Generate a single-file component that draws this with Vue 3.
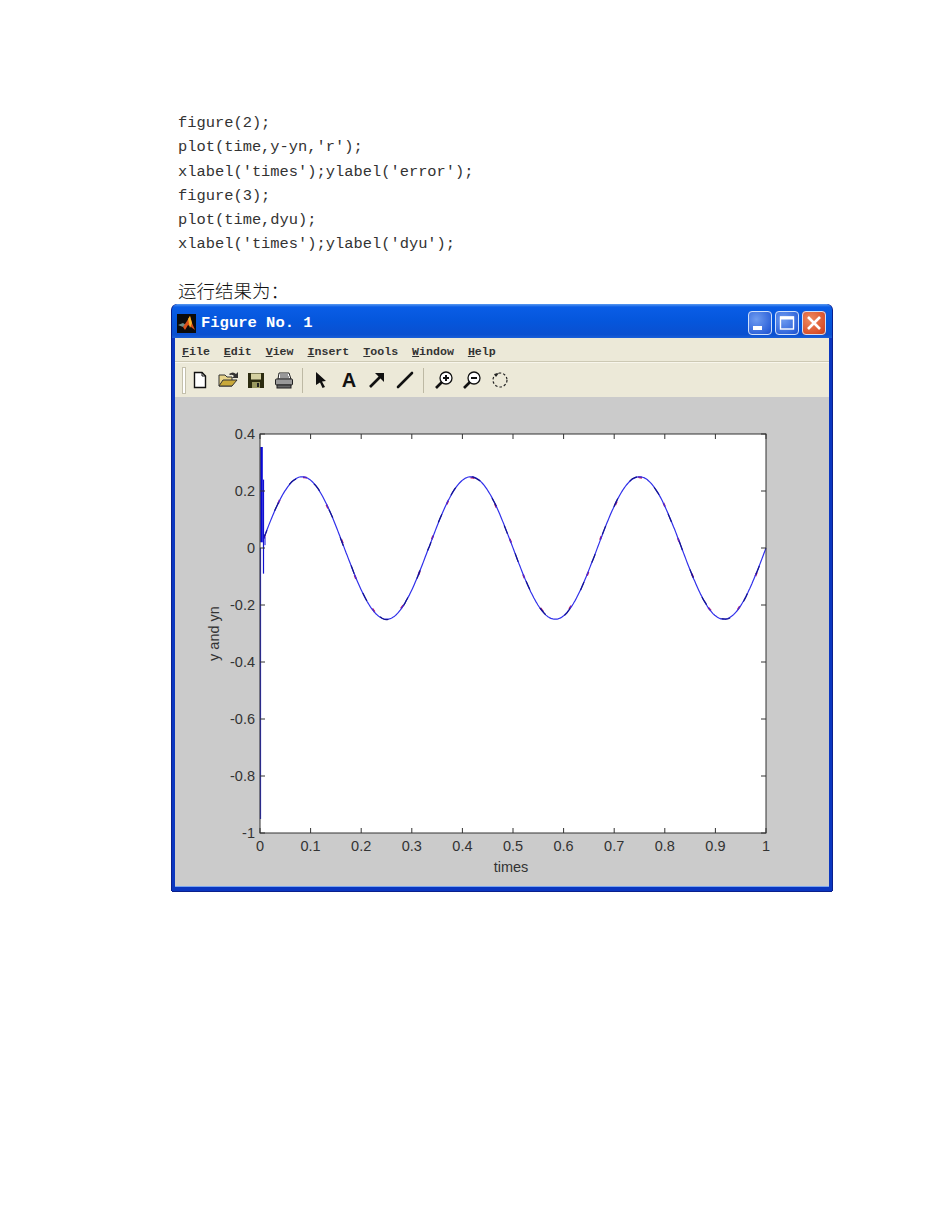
<script setup>
const code = [
  "figure(2);",
  "plot(time,y-yn,'r');",
  "xlabel('times');ylabel('error');",
  "figure(3);",
  "plot(time,dyu);",
  "xlabel('times');ylabel('dyu');",
];
const menus = ["File", "Edit", "View", "Insert", "Tools", "Window", "Help"];

const px = (t) => 85 + 506 * t;
const py = (v) => 37 + (0.4 - v) * 285;

const xTicks = [0, 0.1, 0.2, 0.3, 0.4, 0.5, 0.6, 0.7, 0.8, 0.9, 1].map((v) => ({
  label: String(v),
  x: px(v),
}));
const yTicks = [0.4, 0.2, 0, -0.2, -0.4, -0.6, -0.8, -1].map((v) => ({
  label: String(v),
  y: py(v),
}));

function curve(steps, jitter) {
  let d = "";
  for (let i = 0; i <= steps; i++) {
    const t = 0.007 + (i / steps) * 0.993;
    const n = jitter ? Math.sin(i * 12.9898) * jitter : 0;
    const v = 0.25 * Math.sin(6 * Math.PI * t);
    d += (i ? "L" : "M") + px(t).toFixed(1) + " " + (py(v) + n).toFixed(1);
  }
  return d;
}
const redPath = curve(260, 0.9);
const darkPath = curve(500, 0.45);
const bluePath = curve(500, 0);
const tickLen = 5;
const left = px(0);
const right = px(1);
const top = py(0.4);
const bottom = py(-1);
</script>

<template>
  <div class="page">
    <div class="doc">
      <div v-for="line in code" :key="line" class="code">{{ line }}</div>
      <div class="code">&nbsp;</div>
      <div class="cn">运行结果为：</div>
    </div>

    <div class="win">
      <div class="title">
        <svg class="logo" width="19" height="19" viewBox="0 0 19 19">
          <rect width="19" height="19" fill="#0b0b0b" />
          <path d="M1 11 L6 9 L9 11 L6 13 Z" fill="#6f8f8a" />
          <path d="M6 13 L10 7 L13 2 L15 9 L18 16 L14 13 L11 11 L8 16 Z" fill="#d8501a" />
          <path d="M11 5 L13 2 L15 9 L13 14 Z" fill="#f5b52a" />
        </svg>
        <span class="title-text">Figure No. 1</span>
        <div class="btns">
          <div class="wbtn">
            <svg width="24" height="24" viewBox="0 0 24 24"><rect x="5" y="15" width="9" height="4" fill="#fff" /></svg>
          </div>
          <div class="wbtn">
            <svg width="24" height="24" viewBox="0 0 24 24"><rect x="5.5" y="6" width="13" height="12" fill="none" stroke="#fff" stroke-width="1.4" /><rect x="5" y="5.5" width="14" height="3" fill="#fff" /></svg>
          </div>
          <div class="wbtn close">
            <svg width="24" height="24" viewBox="0 0 24 24"><path d="M6 6 L18 18 M18 6 L6 18" stroke="#fff" stroke-width="2.6" fill="none" /></svg>
          </div>
        </div>
      </div>

      <div class="menu">
        <span v-for="m in menus" :key="m" class="mitem"><u>{{ m[0] }}</u>{{ m.slice(1) }}</span>
      </div>

      <div class="tools">
        <div class="grip"></div>
        <div class="tbtn">
          <svg width="20" height="20" viewBox="0 0 20 20"><path d="M4.5 2.5 H12 L15.5 6 V17.5 H4.5 Z" fill="#fff" stroke="#111" stroke-width="1.4" /><path d="M12 2.5 V6 H15.5" fill="none" stroke="#111" /></svg>
        </div>
        <div class="tbtn">
          <svg width="22" height="20" viewBox="0 0 22 20"><path d="M2 5 H8 L10 7 H15 V16 H2 Z" fill="#e8d48a" stroke="#333" /><path d="M2 16 L6 10 H20 L15 16 Z" fill="#c9a93a" stroke="#333" /><path d="M12 4 Q16 1 19 4 L21 2 V8 H15 L17 6 Q15 4 13 5 Z" fill="#333" /></svg>
        </div>
        <div class="tbtn">
          <svg width="20" height="20" viewBox="0 0 20 20"><rect x="2" y="3" width="16" height="15" fill="#2c2c10" /><rect x="5" y="3.5" width="10" height="6" fill="#d4d0a0" /><rect x="6" y="12" width="8" height="6" fill="#9a9a60" /><rect x="11" y="13" width="2" height="4" fill="#222" /></svg>
        </div>
        <div class="tbtn">
          <svg width="22" height="20" viewBox="0 0 22 20"><path d="M6 3 H16 L18 9 H5 Z" fill="#fff" stroke="#222" /><path d="M7 5 H15 M7 7 H16" stroke="#333" /><rect x="2.5" y="9" width="17" height="6" rx="1" fill="#999" stroke="#222" /><rect x="4" y="15" width="14" height="3" fill="#666" stroke="#222" /></svg>
        </div>
        <div class="tsep"></div>
        <div class="tbtn">
          <svg width="20" height="20" viewBox="0 0 20 20"><path d="M5 2 L15 11 L11 11.5 L14 17 L11.5 18 L9 12.5 L5 15 Z" fill="#111" /></svg>
        </div>
        <div class="tbtn"><span class="tool-a">A</span></div>
        <div class="tbtn">
          <svg width="20" height="20" viewBox="0 0 20 20"><path d="M3 17 L15 5" stroke="#111" stroke-width="2.6" /><path d="M8 3 H17 V12 L14 9 L11 6 Z" fill="#111" /></svg>
        </div>
        <div class="tbtn">
          <svg width="20" height="20" viewBox="0 0 20 20"><path d="M3 17 L17 3" stroke="#111" stroke-width="2.6" stroke-linecap="round" /></svg>
        </div>
        <div class="tsep second"></div>
        <div class="tbtn">
          <svg width="20" height="20" viewBox="0 0 20 20"><circle cx="12" cy="8" r="6" fill="#fff" stroke="#111" stroke-width="1.3" /><path d="M2 18 L8 12" stroke="#111" stroke-width="2.6" /><path d="M9 8 H15 M12 5 V11" stroke="#111" stroke-width="2" /></svg>
        </div>
        <div class="tbtn">
          <svg width="20" height="20" viewBox="0 0 20 20"><circle cx="12" cy="8" r="6" fill="#fff" stroke="#111" stroke-width="1.3" /><path d="M2 18 L8 12" stroke="#111" stroke-width="2.6" /><path d="M9 8 H15" stroke="#111" stroke-width="2" /></svg>
        </div>
        <div class="tbtn">
          <svg width="20" height="20" viewBox="0 0 20 20"><circle cx="10" cy="10" r="7" fill="none" stroke="#222" stroke-width="1.2" stroke-dasharray="2.5 2" /><path d="M4 4 L9 3 L6 7 Z" fill="#222" /></svg>
        </div>
      </div>

      <div class="canvas">
        <svg class="plot" width="654" height="490" viewBox="0 0 654 490">
          <rect :x="left" :y="top" :width="right - left" :height="bottom - top" fill="#fff" />
          <path :d="redPath" fill="none" stroke="#c01860" stroke-width="1.8" stroke-dasharray="4 34" />
          <path :d="bluePath" fill="none" stroke="#3030ea" stroke-width="1.2" />
          <path :d="darkPath" fill="none" stroke="#14148c" stroke-width="1.2" stroke-dasharray="9 21" />
          <path :d="`M${left + 0.5} ${py(0)} V${bottom - 14}`" stroke="#2222e0" stroke-width="1.2" />
          <path :d="`M${left + 1.5} ${top + 13} V${py(0.02)}`" stroke="#0808d8" stroke-width="2.6" />
          <path :d="`M${left + 3.5} ${py(0.24)} V${py(-0.09)}`" stroke="#1010d0" stroke-width="1.2" />
          <path :d="`M${left + 5} ${py(0.04)} V${py(0.01)}`" stroke="#1010d0" stroke-width="1" />
          <rect :x="left" :y="top" :width="right - left" :height="bottom - top" fill="none" stroke="#333" stroke-width="1" />
          <g stroke="#333" stroke-width="1">
            <path v-for="t in xTicks" :key="t.label" :d="`M${t.x} ${bottom} v${-tickLen} M${t.x} ${top} v${tickLen}`" />
            <path v-for="t in yTicks" :key="t.label" :d="`M${left} ${t.y} h${tickLen} M${right} ${t.y} h${-tickLen}`" />
          </g>
          <g class="lbl">
            <text v-for="t in xTicks" :key="t.label" :x="t.x" :y="bottom + 18" text-anchor="middle">{{ t.label }}</text>
            <text v-for="t in yTicks" :key="t.label" :x="left - 5" :y="t.y + 5" text-anchor="end">{{ t.label }}</text>
            <text :x="px(0.5) - 2" :y="bottom + 39" text-anchor="middle">times</text>
            <text text-anchor="middle" :transform="`translate(44 ${py(-0.3)}) rotate(-90)`">y and yn</text>
          </g>
        </svg>
      </div>
    </div>
  </div>
</template>

<style>
html, body { background: #fff; }
</style>

<style scoped>
.page {
  width: 950px;
  height: 1230px;
  background: #fff;
  padding-top: 111px;
  box-sizing: border-box;
  overflow: hidden;
}
.doc {
  margin-left: 178px;
  height: 193px;
  color: #333;
}
.code {
  font-family: "Liberation Mono", monospace;
  font-size: 15.4px;
  line-height: 24.3px;
  height: 24.3px;
  white-space: pre;
}
.cn {
  font-family: "Noto Sans CJK SC", sans-serif;
  font-size: 18.5px;
  line-height: 24px;
  margin-top: -3px;
  font-weight: 300;
  color: #111;
}
.win {
  margin-left: 172px;
  width: 660px;
  height: 587px;
  box-sizing: border-box;
  border-left: 3px solid #0a36c0;
  border-right: 3px solid #0a36c0;
  border-bottom: 4px solid #0a36c0;
  border-top-left-radius: 6px;
  border-top-right-radius: 6px;
  box-shadow: -1px 0 0 #0a1f8c, 1px 0 0 #0a1f8c, 0 1px 0 #0a1f8c;
  display: flex;
  flex-direction: column;
  background: #cbcbcb;
}
.title {
  height: 34px;
  flex: none;
  margin: 0 -3px;
  padding: 4px 6px 0 5px;
  box-sizing: border-box;
  display: flex;
  align-items: center;
  background: linear-gradient(#5a9af0 0, #0a5de6 3px, #0556dc 50%, #0a50d0 90%, #1a5fd8 100%);
  border-top-left-radius: 6px;
  border-top-right-radius: 6px;
}
.logo { flex: none; }
.title-text {
  margin-left: 5px;
  font-family: "Liberation Mono", monospace;
  font-weight: 700;
  font-size: 15.5px;
  color: #fff;
  white-space: pre;
}
.btns {
  margin-left: auto;
  display: flex;
  gap: 3px;
}
.wbtn {
  width: 24px;
  height: 24px;
  box-sizing: border-box;
  border-radius: 4px;
  outline: 1px solid #cfe0fa;
  outline-offset: -1px;
  background: radial-gradient(circle at 35% 35%, #6f9cf0, #2a5fd8 75%, #1d49c0);
  overflow: hidden;
}
.wbtn svg { display: block; }
.close {
  background: radial-gradient(circle at 35% 35%, #ee8a60, #d9502a 70%, #c03a18);
}
.menu {
  height: 24px;
  flex: none;
  padding: 3px 0 0 7px;
  box-sizing: border-box;
  display: flex;
  align-items: center;
  gap: 14px;
  background: #ece9d8;
  border-bottom: 1px solid #cdc9b4;
  font-family: "Liberation Mono", monospace;
  font-weight: 700;
  font-size: 11.6px;
  color: #333;
}
.mitem { white-space: pre; }
.tools {
  height: 35px;
  flex: none;
  padding-left: 7px;
  box-sizing: border-box;
  display: flex;
  align-items: center;
  background: #ece9d8;
  border-top: 1px solid #f8f6ec;
}
.grip {
  width: 4px;
  height: 27px;
  box-sizing: border-box;
  border: 1px solid #c4c0ac;
  background: #fff;
}
.tbtn {
  width: 28px;
  height: 28px;
  display: flex;
  align-items: center;
  justify-content: center;
}
.tool-a {
  font-family: "Liberation Sans", sans-serif;
  font-weight: 700;
  font-size: 20px;
  color: #111;
}
.tsep {
  width: 1px;
  height: 25px;
  margin: 0 4px;
  background: #bdb9a4;
}
.second { margin: 0 6px 0 4px; }
.canvas {
  flex: 1;
  min-height: 0;
  box-shadow: inset 0 -1px 0 #7aa5f0;
}
.plot { display: block; }
.lbl text {
  font-family: "Liberation Sans", sans-serif;
  font-size: 14.5px;
  fill: #333;
}
</style>
